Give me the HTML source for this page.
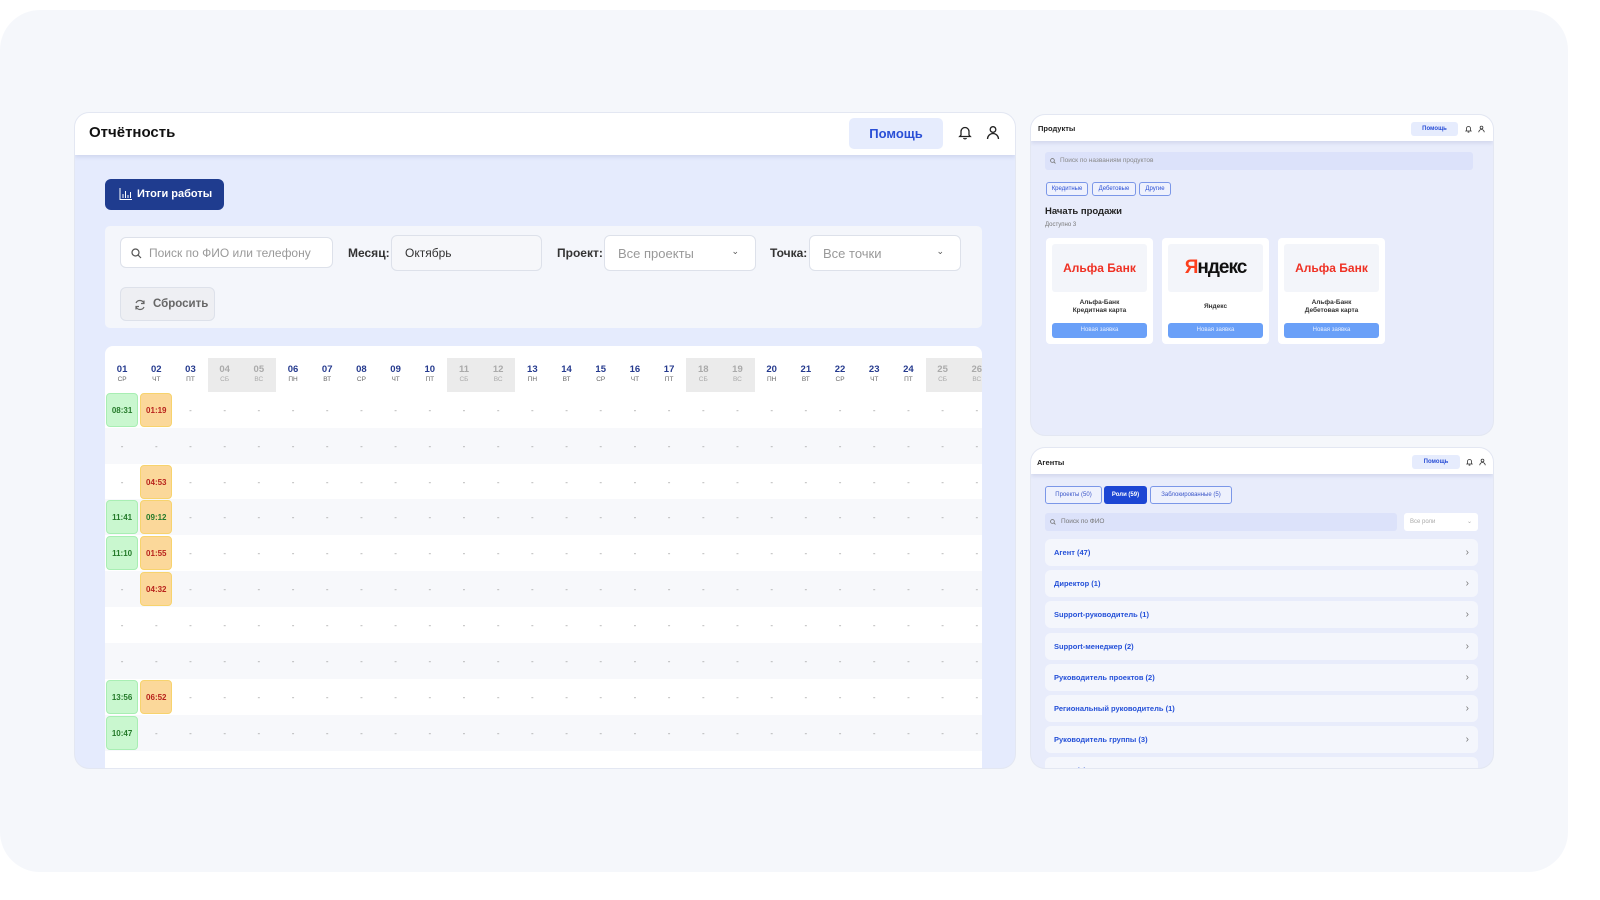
<!DOCTYPE html>
<html><head><meta charset="utf-8"><style>
*{box-sizing:border-box;margin:0;padding:0}
body{width:1600px;height:900px;background:#fff;font-family:"Liberation Sans","Noto Sans CJK SC",sans-serif;position:relative;overflow:hidden}
.frame{position:absolute;left:0;top:10px;width:1568px;height:862px;border-radius:40px;background:#f5f7fb}
.p{position:absolute;border-radius:14px;overflow:hidden;background:#e5ebfd;box-shadow:0 0 0 1px #e3e7f2}
.hd{background:#fff;position:absolute;left:0;right:0;top:0;box-shadow:0 2px 4px rgba(40,60,120,.12)}
.abs{position:absolute}
.row{position:absolute;left:0;height:36px;display:flex;width:900px}
.row span{width:34.2px;flex:none;display:flex;align-items:center;justify-content:center;font-size:8px;color:#999}
.row span.g,.row span.o{margin:1px;width:32.2px;border-radius:4px;font-weight:bold;font-size:8px}
.g{background:#c9f7cf;border:1px solid #a8eeb3;color:#257a2a!important}
.o{background:#fbd89a;border:1px solid #f7d36d;color:#b8231c!important}
.hr{position:absolute;left:0;top:12px;height:34px;display:flex}
.hr div{width:34.2px;flex:none;text-align:center;padding-top:6px}
.hr b{display:block;font-size:9.5px;color:#253a8e}
.hr i{display:block;font-style:normal;font-size:6.5px;color:#666;margin-top:1px}
.hr .w{background:#ebebeb}
.hr .w b,.hr .w i{color:#aaa}
.inp{position:absolute;background:#fff;border:1px solid #dde1ea;border-radius:6px;font-size:12px;display:flex;align-items:center}
.lab{position:absolute;font-size:12px;color:#333;font-weight:bold}
.card{position:absolute;top:123px;width:107px;height:106px;background:#fff;border-radius:4px}
.card .lg{position:absolute;left:6px;top:6px;width:95px;height:48px;background:#f3f5fa;border-radius:3px;display:flex;align-items:center;justify-content:center;font-weight:bold}
.card .t{position:absolute;left:0;right:0;top:61px;text-align:center;font-size:6.5px;font-weight:bold;color:#333;line-height:8px}
.card .b{position:absolute;left:6px;right:6px;top:85px;height:15px;background:#6aa0f8;border-radius:3px;color:#e8f0ff;font-size:6px;text-align:center;line-height:15px}
.li{position:absolute;left:14px;width:433px;height:27px;background:#f4f6fc;border-radius:6px;font-size:7.5px;font-weight:bold;color:#2450d8;padding-left:9px;line-height:27px}
.li:after{content:"›";position:absolute;right:9px;color:#777;font-size:10px;font-weight:normal}
</style></head><body>
<div class="frame"></div>

<!-- MAIN PANEL -->
<div class="p" style="left:75px;top:113px;width:940px;height:655px">
  <div class="hd" style="height:42px">
    <div class="abs" style="left:14px;top:11px;font-size:15px;font-weight:bold;color:#111">Отчётность</div>
    <div class="abs" style="left:774px;top:5px;width:94px;height:31px;background:#e6ecfd;border-radius:5px;color:#2a4fd6;font-weight:bold;font-size:13px;text-align:center;line-height:31px">Помощь</div>
    <svg class="abs" style="left:883px;top:12px" width="14" height="15" viewBox="0 0 14 15" fill="none" stroke="#222" stroke-width="1.3"><path d="M3 10V6.5a4 4 0 0 1 8 0V10l1.3 1.5H1.7z"/><path d="M5.5 13a1.7 1.7 0 0 0 3 0"/></svg>
    <svg class="abs" style="left:911px;top:12px" width="14" height="15" viewBox="0 0 14 15" fill="none" stroke="#222" stroke-width="1.3"><circle cx="7" cy="4.5" r="2.8"/><path d="M1.5 14a5.5 5.5 0 0 1 11 0"/></svg>
  </div>
  <div class="abs" style="left:30px;top:66px;width:119px;height:31px;background:#1f3c8f;border-radius:6px;color:#fff;font-size:11px;font-weight:bold;line-height:31px;padding-left:32px">Итоги работы
    <svg class="abs" style="left:14px;top:9px" width="13" height="12" viewBox="0 0 13 12" fill="none" stroke="#fff" stroke-width="1"><path d="M1 0v11.5h12M4 10V6M6.5 10V3M9 10V7M11.5 10V4"/></svg>
  </div>
  <div class="abs" style="left:30px;top:113px;width:877px;height:102px;background:#f4f6fb;border-radius:5px">
    <div class="inp" style="left:15px;top:11px;width:213px;height:31px;color:#999;padding-left:28px">Поиск по ФИО или телефону
      <svg class="abs" style="left:10px;top:10px" width="11" height="11" viewBox="0 0 11 11" fill="none" stroke="#555" stroke-width="1.2"><circle cx="4.5" cy="4.5" r="3.5"/><path d="M7 7l3 3"/></svg></div>
    <div class="lab" style="left:243px;top:20px">Месяц:</div>
    <div class="inp" style="left:286px;top:9px;width:151px;height:36px;color:#333;padding-left:13px;background:#f6f7fa">Октябрь</div>
    <div class="lab" style="left:452px;top:20px">Проект:</div>
    <div class="inp" style="left:499px;top:9px;width:152px;height:36px;color:#999;padding-left:13px;font-size:13px">Все проекты<span class="abs" style="right:16px;top:10px;font-size:9px;color:#555">⌄</span></div>
    <div class="lab" style="left:665px;top:20px">Точка:</div>
    <div class="inp" style="left:704px;top:9px;width:152px;height:36px;color:#999;padding-left:13px;font-size:13px">Все точки<span class="abs" style="right:16px;top:10px;font-size:9px;color:#555">⌄</span></div>
    <div class="inp" style="left:15px;top:61px;width:95px;height:34px;background:#eeeff3;color:#666;padding-left:32px;font-size:11.5px;font-weight:bold">Сбросить
      <svg class="abs" style="left:13px;top:11px" width="12" height="12" viewBox="0 0 12 12" fill="none" stroke="#666" stroke-width="1.2"><path d="M10 4.5A4.3 4.3 0 0 0 2 4M2 7.5A4.3 4.3 0 0 0 10 8M10 1.5v3H7M2 10.5v-3h3"/></svg></div>
  </div>
  <div class="abs" style="left:30px;top:233px;width:877px;height:430px;background:#fff;border-radius:8px;overflow:hidden">
    <div class="hr">
      <div><b>01</b><i>СР</i></div><div><b>02</b><i>ЧТ</i></div><div><b>03</b><i>ПТ</i></div><div class="w"><b>04</b><i>СБ</i></div><div class="w"><b>05</b><i>ВС</i></div><div><b>06</b><i>ПН</i></div><div><b>07</b><i>ВТ</i></div><div><b>08</b><i>СР</i></div><div><b>09</b><i>ЧТ</i></div><div><b>10</b><i>ПТ</i></div><div class="w"><b>11</b><i>СБ</i></div><div class="w"><b>12</b><i>ВС</i></div><div><b>13</b><i>ПН</i></div><div><b>14</b><i>ВТ</i></div><div><b>15</b><i>СР</i></div><div><b>16</b><i>ЧТ</i></div><div><b>17</b><i>ПТ</i></div><div class="w"><b>18</b><i>СБ</i></div><div class="w"><b>19</b><i>ВС</i></div><div><b>20</b><i>ПН</i></div><div><b>21</b><i>ВТ</i></div><div><b>22</b><i>СР</i></div><div><b>23</b><i>ЧТ</i></div><div><b>24</b><i>ПТ</i></div><div class="w"><b>25</b><i>СБ</i></div><div class="w"><b>26</b><i>ВС</i></div>
    </div>
    <div class="row" style="top:46px;background:#fff"><span class="g">08:31</span><span class="o">01:19</span><span>-</span><span>-</span><span>-</span><span>-</span><span>-</span><span>-</span><span>-</span><span>-</span><span>-</span><span>-</span><span>-</span><span>-</span><span>-</span><span>-</span><span>-</span><span>-</span><span>-</span><span>-</span><span>-</span><span>-</span><span>-</span><span>-</span><span>-</span><span>-</span></div>
    <div class="row" style="top:82px;background:#f7f8fb"><span>-</span><span>-</span><span>-</span><span>-</span><span>-</span><span>-</span><span>-</span><span>-</span><span>-</span><span>-</span><span>-</span><span>-</span><span>-</span><span>-</span><span>-</span><span>-</span><span>-</span><span>-</span><span>-</span><span>-</span><span>-</span><span>-</span><span>-</span><span>-</span><span>-</span><span>-</span></div>
    <div class="row" style="top:118px;background:#fff"><span>-</span><span class="o">04:53</span><span>-</span><span>-</span><span>-</span><span>-</span><span>-</span><span>-</span><span>-</span><span>-</span><span>-</span><span>-</span><span>-</span><span>-</span><span>-</span><span>-</span><span>-</span><span>-</span><span>-</span><span>-</span><span>-</span><span>-</span><span>-</span><span>-</span><span>-</span><span>-</span></div>
    <div class="row" style="top:153px;background:#f7f8fb"><span class="g">11:41</span><span class="o" style="color:#257a2a!important">09:12</span><span>-</span><span>-</span><span>-</span><span>-</span><span>-</span><span>-</span><span>-</span><span>-</span><span>-</span><span>-</span><span>-</span><span>-</span><span>-</span><span>-</span><span>-</span><span>-</span><span>-</span><span>-</span><span>-</span><span>-</span><span>-</span><span>-</span><span>-</span><span>-</span></div>
    <div class="row" style="top:189px;background:#fff"><span class="g">11:10</span><span class="o">01:55</span><span>-</span><span>-</span><span>-</span><span>-</span><span>-</span><span>-</span><span>-</span><span>-</span><span>-</span><span>-</span><span>-</span><span>-</span><span>-</span><span>-</span><span>-</span><span>-</span><span>-</span><span>-</span><span>-</span><span>-</span><span>-</span><span>-</span><span>-</span><span>-</span></div>
    <div class="row" style="top:225px;background:#f7f8fb"><span>-</span><span class="o">04:32</span><span>-</span><span>-</span><span>-</span><span>-</span><span>-</span><span>-</span><span>-</span><span>-</span><span>-</span><span>-</span><span>-</span><span>-</span><span>-</span><span>-</span><span>-</span><span>-</span><span>-</span><span>-</span><span>-</span><span>-</span><span>-</span><span>-</span><span>-</span><span>-</span></div>
    <div class="row" style="top:261px;background:#fff"><span>-</span><span>-</span><span>-</span><span>-</span><span>-</span><span>-</span><span>-</span><span>-</span><span>-</span><span>-</span><span>-</span><span>-</span><span>-</span><span>-</span><span>-</span><span>-</span><span>-</span><span>-</span><span>-</span><span>-</span><span>-</span><span>-</span><span>-</span><span>-</span><span>-</span><span>-</span></div>
    <div class="row" style="top:297px;background:#f7f8fb"><span>-</span><span>-</span><span>-</span><span>-</span><span>-</span><span>-</span><span>-</span><span>-</span><span>-</span><span>-</span><span>-</span><span>-</span><span>-</span><span>-</span><span>-</span><span>-</span><span>-</span><span>-</span><span>-</span><span>-</span><span>-</span><span>-</span><span>-</span><span>-</span><span>-</span><span>-</span></div>
    <div class="row" style="top:333px;background:#fff"><span class="g">13:56</span><span class="o">06:52</span><span>-</span><span>-</span><span>-</span><span>-</span><span>-</span><span>-</span><span>-</span><span>-</span><span>-</span><span>-</span><span>-</span><span>-</span><span>-</span><span>-</span><span>-</span><span>-</span><span>-</span><span>-</span><span>-</span><span>-</span><span>-</span><span>-</span><span>-</span><span>-</span></div>
    <div class="row" style="top:369px;background:#f7f8fb"><span class="g">10:47</span><span>-</span><span>-</span><span>-</span><span>-</span><span>-</span><span>-</span><span>-</span><span>-</span><span>-</span><span>-</span><span>-</span><span>-</span><span>-</span><span>-</span><span>-</span><span>-</span><span>-</span><span>-</span><span>-</span><span>-</span><span>-</span><span>-</span><span>-</span><span>-</span><span>-</span></div>
    <div class="row" style="top:405px;background:#fff"><span>-</span><span>-</span><span>-</span><span>-</span><span>-</span><span>-</span><span>-</span><span>-</span><span>-</span><span>-</span><span>-</span><span>-</span><span>-</span><span>-</span><span>-</span><span>-</span><span>-</span><span>-</span><span>-</span><span>-</span><span>-</span><span>-</span><span>-</span><span>-</span><span>-</span><span>-</span></div>
  </div>
</div>

<!-- PRODUCTS PANEL -->
<div class="p" style="left:1031px;top:115px;width:462px;height:320px;background:#e8ecfb">
  <div class="hd" style="height:26px">
    <div class="abs" style="left:7px;top:9px;font-size:7.5px;font-weight:bold;color:#222">Продукты</div>
    <div class="abs" style="left:380px;top:7px;width:47px;height:14px;background:#e6ecfd;border-radius:3px;color:#2a4fd6;font-size:6px;font-weight:bold;text-align:center;line-height:14px">Помощь</div>
    <svg class="abs" style="left:434px;top:10px" width="7" height="8" viewBox="0 0 14 15" fill="none" stroke="#333" stroke-width="1.6"><path d="M3 10V6.5a4 4 0 0 1 8 0V10l1.3 1.5H1.7z"/><path d="M5.5 13a1.7 1.7 0 0 0 3 0"/></svg>
    <svg class="abs" style="left:447px;top:10px" width="7" height="8" viewBox="0 0 14 15" fill="none" stroke="#333" stroke-width="1.6"><circle cx="7" cy="4.5" r="2.8"/><path d="M1.5 14a5.5 5.5 0 0 1 11 0"/></svg>
  </div>
  <div class="abs" style="left:14px;top:37px;width:428px;height:18px;background:#dce2fa;border-radius:3px;font-size:6.5px;color:#888;line-height:18px;padding-left:15px">Поиск по названиям продуктов
    <svg class="abs" style="left:5px;top:6px" width="6" height="6" viewBox="0 0 11 11" fill="none" stroke="#777" stroke-width="1.5"><circle cx="4.5" cy="4.5" r="3.5"/><path d="M7 7l3 3"/></svg></div>
  <div class="abs" style="left:15px;top:67px;width:42px;height:14px;border:1px solid #7b97e8;border-radius:3px;font-size:6px;color:#2a4fd6;text-align:center;line-height:12px;background:#eef1fd">Кредитные</div>
  <div class="abs" style="left:61px;top:67px;width:44px;height:14px;border:1px solid #7b97e8;border-radius:3px;font-size:6px;color:#2a4fd6;text-align:center;line-height:12px;background:#eef1fd">Дебетовые</div>
  <div class="abs" style="left:108px;top:67px;width:32px;height:14px;border:1px solid #7b97e8;border-radius:3px;font-size:6px;color:#2a4fd6;text-align:center;line-height:12px;background:#eef1fd">Другие</div>
  <div class="abs" style="left:14px;top:91px;font-size:9.5px;font-weight:bold;color:#222">Начать продажи</div>
  <div class="abs" style="left:14px;top:107px;font-size:6px;color:#777">Доступно 3</div>
  <div class="card" style="left:15px"><div class="lg" style="color:#ef3124;font-size:12px">Альфа Банк</div><div class="t">Альфа-Банк<br>Кредитная карта</div><div class="b">Новая заявка</div></div>
  <div class="card" style="left:131px"><div class="lg" style="font-size:19px;color:#111;letter-spacing:-1px"><span style="color:#fc3f1d">Я</span>ндекс</div><div class="t" style="top:65px">Яндекс</div><div class="b">Новая заявка</div></div>
  <div class="card" style="left:247px"><div class="lg" style="color:#ef3124;font-size:12px">Альфа Банк</div><div class="t">Альфа-Банк<br>Дебетовая карта</div><div class="b">Новая заявка</div></div>
</div>

<!-- AGENTS PANEL -->
<div class="p" style="left:1031px;top:448px;width:462px;height:320px;background:#e8ecfb">
  <div class="hd" style="height:26px">
    <div class="abs" style="left:6px;top:10px;font-size:7.5px;font-weight:bold;color:#222">Агенты</div>
    <div class="abs" style="left:381px;top:7px;width:48px;height:14px;background:#e6ecfd;border-radius:3px;color:#2a4fd6;font-size:6px;font-weight:bold;text-align:center;line-height:14px">Помощь</div>
    <svg class="abs" style="left:435px;top:10px" width="7" height="8" viewBox="0 0 14 15" fill="none" stroke="#333" stroke-width="1.6"><path d="M3 10V6.5a4 4 0 0 1 8 0V10l1.3 1.5H1.7z"/><path d="M5.5 13a1.7 1.7 0 0 0 3 0"/></svg>
    <svg class="abs" style="left:448px;top:10px" width="7" height="8" viewBox="0 0 14 15" fill="none" stroke="#333" stroke-width="1.6"><circle cx="7" cy="4.5" r="2.8"/><path d="M1.5 14a5.5 5.5 0 0 1 11 0"/></svg>
  </div>
  <div class="abs" style="left:14px;top:38px;width:57px;height:18px;border:1px solid #7b97e8;border-radius:3px;font-size:6px;color:#3a55c8;text-align:center;line-height:16px;background:#eef1fd">Проекты (50)</div>
  <div class="abs" style="left:73px;top:38px;width:43px;height:18px;border-radius:3px;font-size:6px;color:#fff;text-align:center;line-height:18px;background:#1c46d4;font-weight:bold">Роли (59)</div>
  <div class="abs" style="left:119px;top:38px;width:82px;height:18px;border:1px solid #7b97e8;border-radius:3px;font-size:6px;color:#3a55c8;text-align:center;line-height:16px;background:#eef1fd">Заблокированные (5)</div>
  <div class="abs" style="left:14px;top:65px;width:352px;height:18px;background:#dce2fa;border-radius:3px;font-size:6.5px;color:#777;line-height:18px;padding-left:16px">Поиск по ФИО
    <svg class="abs" style="left:5px;top:6px" width="6" height="6" viewBox="0 0 11 11" fill="none" stroke="#777" stroke-width="1.5"><circle cx="4.5" cy="4.5" r="3.5"/><path d="M7 7l3 3"/></svg></div>
  <div class="abs" style="left:373px;top:65px;width:74px;height:18px;background:#fff;border-radius:3px;font-size:6px;color:#aaa;line-height:18px;padding-left:6px">Все роли<span class="abs" style="right:6px;top:0">⌄</span></div>
  <div class="li" style="top:91px">Агент (47)</div>
  <div class="li" style="top:122px">Директор (1)</div>
  <div class="li" style="top:153px">Support-руководитель (1)</div>
  <div class="li" style="top:185px">Support-менеджер (2)</div>
  <div class="li" style="top:216px">Руководитель проектов (2)</div>
  <div class="li" style="top:247px">Региональный руководитель (1)</div>
  <div class="li" style="top:278px">Руководитель группы (3)</div>
  <div class="li" style="top:309px">Агент (1)</div>
</div>
</body></html>
